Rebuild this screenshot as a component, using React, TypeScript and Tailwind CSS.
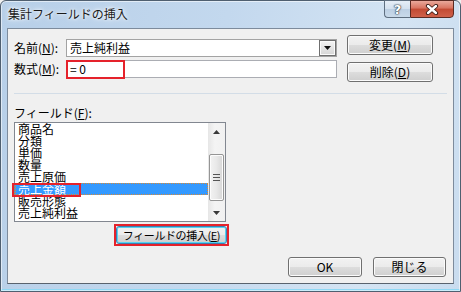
import React from 'react';

const FONT = "font-['Noto_Sans_CJK_JP','Noto_Sans_CJK_SC',sans-serif]";

const FIELDS = ['商品名', '分類', '単価', '数量', '売上原価', '売上金額', '販売形態', '売上純利益'];

const Btn: React.FC<{ className?: string; children: React.ReactNode }> = ({ className = '', children }) => (
  <div
    className={`flex items-center justify-center whitespace-nowrap rounded-[3px] border border-[#707070] bg-[linear-gradient(to_bottom,#f2f2f2_0%,#ebebeb_50%,#dddddd_50%,#cfcfcf_100%)] shadow-[inset_0_0_0_1px_#fbfbfb] text-[12px] leading-[12px] text-black ${className}`}
  >
    {children}
  </div>
);

const Key: React.FC<{ k: string }> = ({ k }) => <span className="underline underline-offset-[1px]">{k}</span>;

const App: React.FC = () => {
  return (
    <div className={`w-[461px] h-[292px] overflow-hidden bg-[#f0f0f0] ${FONT}`}>
      <div className="w-[461px] h-[292px] flex flex-col rounded-t-[6px] border border-[#4f5f70] bg-[linear-gradient(100deg,#b7cfe8_0%,#c3d8ee_45%,#d4e4f3_80%,#c9dcef_100%)] shadow-[inset_0_0_0_1px_rgba(255,255,255,0.55),inset_0_-2px_0_#8fd8f4]">
        {/* Title bar */}
        <div className="h-[27px] shrink-0 flex justify-between items-start pl-[7px] pr-[6px]">
          <div className="pt-[6px] text-[12px] leading-[14px] text-[#1a1a1a] [text-shadow:0_0_6px_#ffffff,0_0_3px_#ffffff]">
            集計フィールドの挿入
          </div>
          <div className="flex -mt-px">
            <div className="w-[26px] h-[18px] flex items-center justify-center rounded-bl-[4px] border border-[#5f6f80] border-r-0 bg-[linear-gradient(to_bottom,#e6eef7_0%,#d3e0ee_50%,#bccfe3_50%,#c9daea_100%)]">
              <span className="text-[13px] leading-[13px] font-bold text-white [text-shadow:0_0_1px_#2c3a48,0_0_1px_#2c3a48,0_0_2px_#2c3a48] font-['DejaVu_Sans',sans-serif]">?</span>
            </div>
            <div className="w-[44px] h-[18px] flex items-center justify-center rounded-br-[4px] border border-[#5b2a22] bg-[linear-gradient(to_bottom,#e9a99b_0%,#d8735f_45%,#c24a33_50%,#d0614a_100%)]">
              <svg width="14" height="11" viewBox="0 0 14 11">
                <path d="M3 2 L11 9 M11 2 L3 9" stroke="#3a1a14" strokeWidth="4.2" strokeLinecap="round" />
                <path d="M3 2 L11 9 M11 2 L3 9" stroke="#ffffff" strokeWidth="2.4" strokeLinecap="round" />
              </svg>
            </div>
          </div>
        </div>

        {/* Client area */}
        <div className="mx-[6px] h-[256px] shrink-0 flex flex-col border border-[#7d8b9c] border-b-[#59636e] bg-[#f0f0f0] text-[12px] leading-[12px] text-black">
          {/* Name / formula rows */}
          <div className="flex pt-[6px] pl-[6px]">
            <div className="flex flex-col pt-[4px] gap-[3px]">
              <div className="flex items-center h-[18px]">
                <div className="w-[52px]">名前(<Key k="N" />):</div>
                <div className="w-[271px] h-[18px] flex items-stretch border border-[#a3a3a3] bg-white">
                  <div className="flex-1 flex items-center pl-[3px]">売上純利益</div>
                  <div className="w-[17px] flex items-center justify-center border border-[#6f6f6f] bg-[linear-gradient(to_bottom,#f4f4f4_0%,#e4e4e4_50%,#d6d6d6_100%)] shadow-[inset_0_0_0_1px_#fafafa]">
                    <svg width="7" height="4" viewBox="0 0 7 4">
                      <path d="M0 0 H7 L3.5 4 Z" fill="#111" />
                    </svg>
                  </div>
                </div>
              </div>
              <div className="flex items-center h-[18px]">
                <div className="w-[52px]">数式(<Key k="M" />):</div>
                <div className="relative w-[271px] h-[18px] flex items-center border border-[#abadb3] bg-white pl-[3px]">
                  = 0
                  <div className="absolute -left-px -top-px w-[59px] h-[19px] border-2 border-[#e5222b]" />
                </div>
              </div>
            </div>
            <div className="ml-[10px] flex flex-col gap-[7px]">
              <Btn className="w-[86px] h-[20px]">変更(<Key k="M" />)</Btn>
              <Btn className="w-[86px] h-[20px]">削除(<Key k="D" />)</Btn>
            </div>
          </div>

          {/* Separator */}
          <div className="mt-[11px] mx-[6px] h-px bg-[#d3dde7]" />

          {/* Field list */}
          <div className="mt-[12px] ml-[6px] leading-[14px]">
            フィールド(<Key k="F" />):
          </div>
          <div className="relative mt-[2px] ml-[6px] w-[212px] h-[100px] flex border border-[#828790] bg-white">
            <div className="flex-1 flex flex-col text-[12px] leading-[12px]">
              {FIELDS.map((f, i) =>
                i === 5 ? (
                  <div
                    key={f}
                    className="h-[12px] flex items-center pl-[2px] bg-[#3399ff] text-white border border-dotted border-[#d88a36] leading-[10px]"
                  >
                    {f}
                  </div>
                ) : (
                  <div key={f} className="h-[12px] flex items-center pl-[3px]">
                    {f}
                  </div>
                )
              )}
            </div>
            {/* Scrollbar */}
            <div className="w-[17px] flex flex-col bg-[linear-gradient(to_right,#e6e6e6,#f4f4f4_40%,#f1f1f1)]">
              <div className="h-[17px] flex items-center justify-center">
                <svg width="7" height="4" viewBox="0 0 7 4">
                  <path d="M0 4 H7 L3.5 0 Z" fill="#3a3a3a" />
                </svg>
              </div>
              <div className="flex-1">
                <div className="mt-[14px] mx-px h-[47px] flex flex-col items-center justify-center gap-[2px] rounded-[2px] border border-[#959595] bg-[linear-gradient(to_right,#f3f3f3_0%,#e8e8e8_50%,#d6d6d6_100%)] shadow-[inset_0_0_0_1px_#fcfcfc]">
                  <div className="w-[7px] h-px bg-[#555]" />
                  <div className="w-[7px] h-px bg-[#555]" />
                  <div className="w-[7px] h-px bg-[#555]" />
                </div>
              </div>
              <div className="h-[17px] flex items-center justify-center">
                <svg width="7" height="4" viewBox="0 0 7 4">
                  <path d="M0 0 H7 L3.5 4 Z" fill="#3a3a3a" />
                </svg>
              </div>
            </div>
            <div className="absolute left-[-3px] top-[60px] w-[69px] h-[14px] border-2 border-[#e5222b]" />
          </div>

          {/* Insert field button */}
          <div className="mt-[2px] ml-[106px] w-[115px] h-[22px] border-2 border-[#e5222b]">
            <div className="w-full h-full rounded-[3px] border border-[#3c7fb1] bg-[linear-gradient(to_bottom,#f2f2f2_0%,#ebebeb_50%,#dddddd_50%,#cfcfcf_100%)] shadow-[inset_0_0_0_1px_#55d3f2] flex items-center justify-center whitespace-nowrap text-[11px] leading-[12px] tracking-[-0.4px]">
              フィールドの挿入(<Key k="E" />)
            </div>
          </div>

          {/* OK / Close */}
          <div className="mt-[11px] flex justify-end gap-[11px] pr-[7px]">
            <Btn className="w-[74px] h-[20px]">OK</Btn>
            <Btn className="w-[73px] h-[20px]">閉じる</Btn>
          </div>
        </div>
      </div>
    </div>
  );
};

export default App;
